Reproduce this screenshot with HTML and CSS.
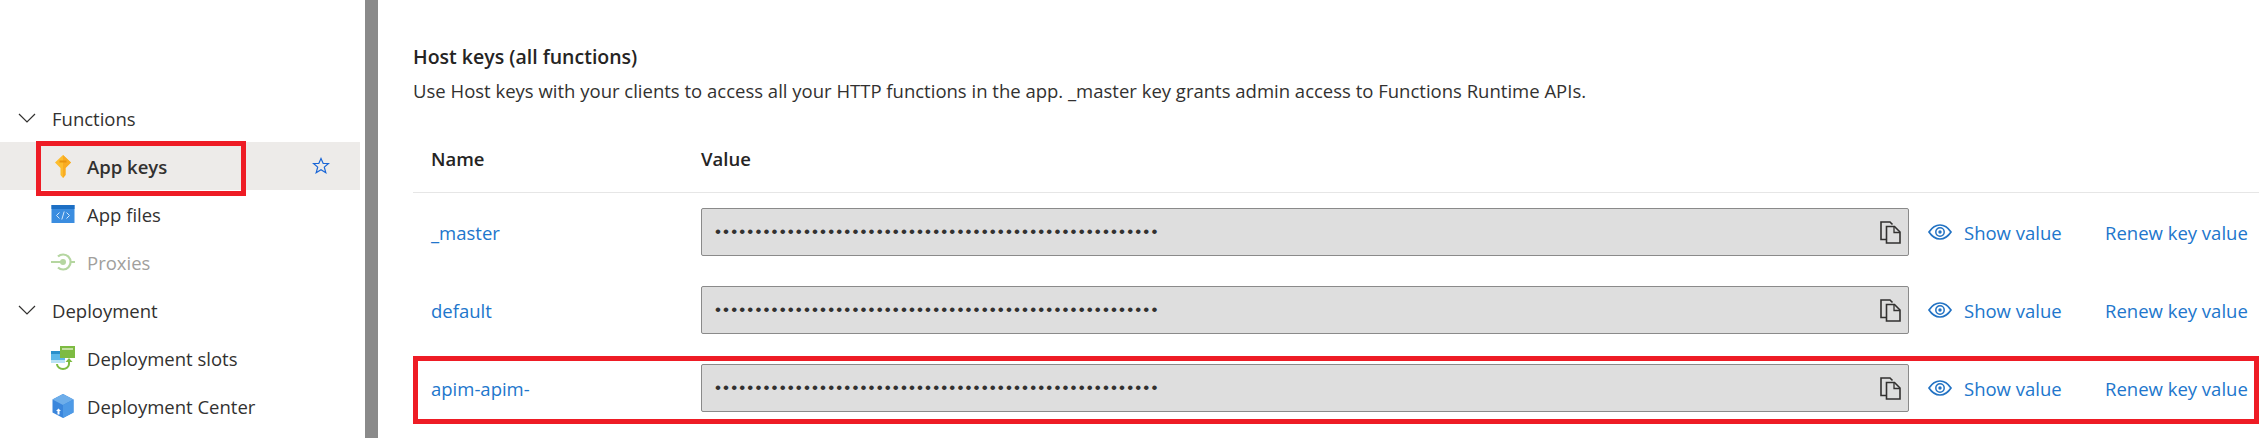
FILE: index.html
```html
<!DOCTYPE html>
<html lang="en">
<head>
  <meta charset="UTF-8">
  <title>App keys</title>
  <link rel="stylesheet" href="styles.css">
</head>
<body>
  <div class="page">
    <nav class="nav">
      <div class="nav-section">
        <svg class="chevron" viewBox="0 0 18 10"><path d="M1 1l8 8 8-8"/></svg>
        <span>Functions</span>
      </div>
      <div class="nav-item active">
        <svg class="nav-icon" viewBox="0 0 24 24">
          <path d="M12 1l8 7.500-5.500 5.500v7l-2.500 3-2.500-3v-7l-5.500-5.500z" fill="#fdbd2e"/>
          <path d="M12 1l8 7.500-5.500 5.500v7l-2.500 3z" fill="#f9ab22"/>
          <rect x="8.500" y="6.500" width="7" height="2" fill="#e8940f"/>
        </svg>
        <span>App keys</span>
        <svg class="star" viewBox="0 0 18 18"><path d="M9 1.500l2.200 5h5.300l-4.200 3.600 1.500 5.600-4.800-3-4.800 3 1.500-5.600-4.200-3.600h5.300z"/></svg>
        <div class="callout nav-callout"></div>
      </div>
      <div class="nav-item">
        <svg class="nav-icon" viewBox="0 0 24 24">
          <rect x="0.500" y="3" width="23" height="18" fill="#3b8de0"/>
          <rect x="0.500" y="3" width="23" height="4" fill="#1d6fc4"/>
          <path d="M8.500 10.500l-3 3 3 3M15.500 10.500l3 3-3 3M13.200 9.500l-2.400 8" fill="none" stroke="#d4e8fb" stroke-width="1"/>
        </svg>
        <span>App files</span>
      </div>
      <div class="nav-item disabled">
        <svg class="nav-icon" viewBox="0 0 24 24" fill="none" stroke="#b5d6a0" stroke-width="2.200">
          <path d="M0 12h10M19.500 12h4.500"/>
          <circle cx="12" cy="12" r="3" fill="#b5d6a0" stroke="none"/>
          <path d="M7 6.500a7.500 7.500 0 1 1 0 11"/>
        </svg>
        <span>Proxies</span>
      </div>
      <div class="nav-section">
        <svg class="chevron" viewBox="0 0 18 10"><path d="M1 1l8 8 8-8"/></svg>
        <span>Deployment</span>
      </div>
      <div class="nav-item">
        <svg class="nav-icon" viewBox="0 0 24 24">
          <rect x="0" y="5" width="14" height="12" fill="#5db7e8"/>
          <rect x="0" y="5" width="14" height="3" fill="#2a8fcb"/>
          <rect x="0" y="14" width="14" height="3" fill="#b9e2f5"/>
          <rect x="9" y="0" width="15" height="12" fill="#7dbb42"/>
          <rect x="11" y="2" width="11" height="2" fill="#c4dfa3"/>
          <path d="M6 18a6 5 0 0 0 12 0l0-3" fill="none" stroke="#7dbb42" stroke-width="2"/>
          <path d="M14.500 16l3.500-4 3.500 4z" fill="#7dbb42"/>
        </svg>
        <span>Deployment slots</span>
      </div>
      <div class="nav-item">
        <svg class="nav-icon" viewBox="0 0 24 24">
          <path d="M12 0l10.500 5.500v13l-10.500 5.500-10.500-5.500v-13z" fill="#3a86dc"/>
          <path d="M12 0l10.500 5.500-10.500 5.500-10.500-5.500z" fill="#6eaeea"/>
          <path d="M12 11l10.500-5.500v13l-10.500 5.500z" fill="#4e9ae6"/>
          <path d="M6 13.500l2.500 2.500h-1.500v3.500h-2v-3.500h-1.500z" fill="#fff" transform="translate(1.500 1)"/>
        </svg>
        <span>Deployment Center</span>
      </div>
    </nav>
    <div class="splitter"></div>
    <main class="main">
      <h1 class="title">Host keys (all functions)</h1>
      <p class="desc">Use Host keys with your clients to access all your HTTP functions in the app. _master key grants admin access to Functions Runtime APIs.</p>

      <div class="table-head">
        <div>Name</div>
        <div>Value</div>
      </div>

      <div class="key-row">
        <a class="key-name">_master</a>
        <div class="key-value">
          <span class="dots">•••••••••••••••••••••••••••••••••••••••••••••••••••••••</span>
          <svg class="copy" viewBox="0 0 21 23"><use href="#copy-icon"/></svg>
        </div>
        <a class="show-value"><svg class="eye" viewBox="0 0 24 16"><use href="#eye-icon"/></svg>Show value</a>
        <a class="renew">Renew key value</a>
      </div>

      <div class="key-row">
        <a class="key-name">default</a>
        <div class="key-value">
          <span class="dots">•••••••••••••••••••••••••••••••••••••••••••••••••••••••</span>
          <svg class="copy" viewBox="0 0 21 23"><use href="#copy-icon"/></svg>
        </div>
        <a class="show-value"><svg class="eye" viewBox="0 0 24 16"><use href="#eye-icon"/></svg>Show value</a>
        <a class="renew">Renew key value</a>
      </div>

      <div class="key-row">
        <a class="key-name">apim-apim-</a>
        <div class="key-value">
          <span class="dots">•••••••••••••••••••••••••••••••••••••••••••••••••••••••</span>
          <svg class="copy" viewBox="0 0 21 23"><use href="#copy-icon"/></svg>
        </div>
        <a class="show-value"><svg class="eye" viewBox="0 0 24 16"><use href="#eye-icon"/></svg>Show value</a>
        <a class="renew">Renew key value</a>
        <div class="callout row-callout"></div>
      </div>
    </main>
  </div>

  <svg class="defs" width="0" height="0">
    <symbol id="copy-icon" viewBox="0 0 21 23">
      <path d="M6 18.500H1V1h9l2.500 2.500" fill="none" stroke="#323130" stroke-width="1.600"/>
      <path d="M6.500 5.500h8l5.500 5.500v11H6.500z" fill="none" stroke="#323130" stroke-width="1.600"/>
      <path d="M14 5.500v6h6" fill="none" stroke="#323130" stroke-width="1.300"/>
    </symbol>
    <symbol id="eye-icon" viewBox="0 0 24 16">
      <path d="M1 8c3-4.500 6.500-7 11-7s8 2.500 11 7c-3 4.500-6.500 7-11 7s-8-2.500-11-7z" fill="none" stroke="#2272c3" stroke-width="1.700"/>
      <circle cx="12" cy="8" r="4.200" fill="none" stroke="#2272c3" stroke-width="1.500"/>
      <circle cx="12" cy="8" r="1.700" fill="#2272c3"/>
    </symbol>
  </svg>
</body>
</html>
```

FILE: styles.css
```css
* {
  box-sizing: border-box;
}
body {
  margin: 0;
  height: 438px;
  overflow: hidden;
  background: white;
  font-family: "Open Sans", "Liberation Sans", sans-serif;
  font-size: 18.5px;
  color: #323130;
}
.page {
  display: flex;
  height: 438px;
}
.nav {
  flex: 0 0 360px;
  padding-top: 94px;
}
.nav-section,
.nav-item {
  display: flex;
  align-items: center;
  height: 48px;
  position: relative;
}
.nav-section {
  padding-left: 18px;
  gap: 16px;
}
.nav-item {
  padding-left: 51px;
  gap: 12px;
}
.chevron {
  width: 18px;
  height: 10px;
  fill: none;
  stroke: #323130;
  stroke-width: 1.2;
}
.nav-icon {
  width: 24px;
  height: 24px;
  flex: none;
}
.active {
  background: #edebe9;
  font-weight: 600;
}
.disabled {
  color: #a19f9d;
}
.star {
  position: absolute;
  left: 312px;
  top: 15px;
  width: 18px;
  height: 18px;
  fill: none;
  stroke: #1a66d6;
  stroke-width: 1.2;
}
.callout {
  position: absolute;
  border: 5px solid #ee1c25;
  pointer-events: none;
}
.nav-callout {
  left: 36px;
  top: -1px;
  width: 210px;
  height: 55px;
}
.splitter {
  flex: 0 0 13px;
  margin-left: 5px;
  background: #8a8a8a;
}
.main {
  flex: 1;
  padding: 44px 0 0 35px;
  min-width: 0;
}
.title {
  margin: 0;
  font-size: 19.5px;
  font-weight: 600;
  line-height: 26px;
  color: #252423;
}
.desc {
  margin: 8px 0 0;
  line-height: 26px;
  color: #323130;
  white-space: nowrap;
}
.table-head {
  display: grid;
  grid-template-columns: 270px 1fr;
  align-items: center;
  height: 68px;
  margin-top: 21px;
  padding-left: 18px;
  font-weight: 600;
  color: #252423;
  border-bottom: 1px solid #e6e6e6;
}
.key-row {
  display: grid;
  grid-template-columns: 270px 1208px 196px auto;
  align-items: center;
  height: 78px;
  padding: 15px 0 15px 18px;
  position: relative;
}
.key-name,
.show-value,
.renew {
  color: #2176cc;
}
.key-value {
  display: flex;
  align-items: center;
  justify-content: space-between;
  height: 48px;
  padding: 0 7px 0 13px;
  background: #dedede;
  border: 1px solid #8a8a8a;
  border-radius: 2px;
}
.dots {
  font-family: "Liberation Sans", sans-serif;
  font-size: 17px;
  letter-spacing: 2.13px;
  color: #323130;
}
.copy {
  width: 21px;
  height: 23px;
}
.show-value {
  display: flex;
  align-items: center;
  gap: 12px;
  margin-left: 19px;
  white-space: nowrap;
}
.eye {
  width: 24px;
  height: 16px;
  flex: none;
}
.renew {
  white-space: nowrap;
}
.row-callout {
  left: 0;
  right: 0;
  top: 7px;
  height: 68px;
}
.defs {
  position: absolute;
}
```
